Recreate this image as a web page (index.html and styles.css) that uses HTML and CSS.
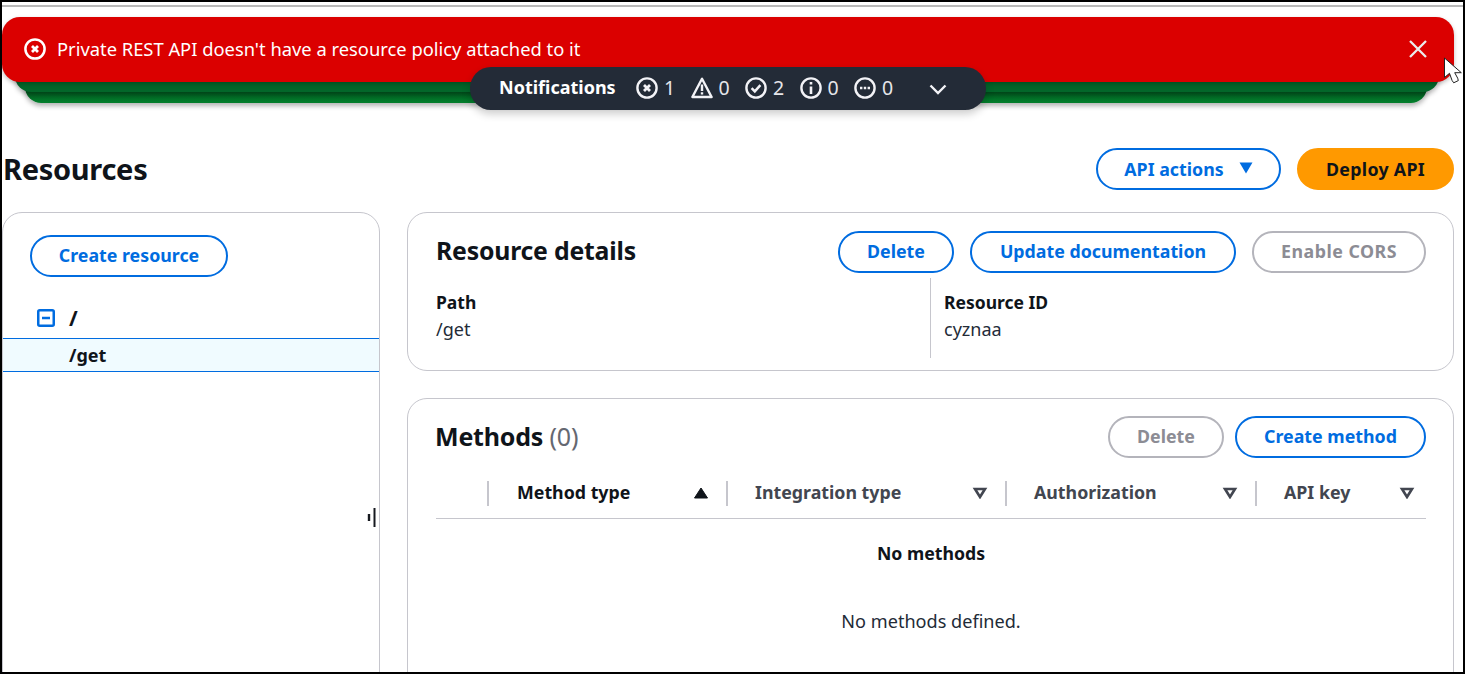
FILE: index.html
```html
<!DOCTYPE html>
<html lang="en">
<head>
<meta charset="utf-8">
<title>Resources</title>
<link rel="stylesheet" href="styles.css">
</head>
<body>
<div class="frame">
  <div class="topline"></div>

  <div class="flash-stack">
    <div class="flash-back flash-back-2"></div>
    <div class="flash-back flash-back-1"></div>
    <div class="flash-error">
      <svg class="flash-icon" viewBox="0 0 22 22"><circle cx="11" cy="11" r="9.6" fill="none" stroke="#fff" stroke-width="2.5"/><path d="M8 8l6 6M14 8l-6 6" stroke="#fff" stroke-width="2.8" fill="none"/></svg>
      <span class="flash-text">Private REST API doesn't have a resource policy attached to it</span>
      <svg class="flash-close" viewBox="0 0 18 18"><path d="M1 1l16 16M17 1L1 17" stroke="#eaeded" stroke-width="2.3" fill="none"/></svg>
    </div>
    <div class="notif-bar">
      <span class="notif-title">Notifications</span>
      <span class="notif-item notif-first"><svg class="ni" viewBox="0 0 22 22"><circle cx="11" cy="11" r="9.6" fill="none" stroke="#f3f3f7" stroke-width="2.4"/><path d="M8 8l6 6M14 8l-6 6" stroke="#f3f3f7" stroke-width="2.8" fill="none"/></svg>1</span>
      <span class="notif-item"><svg class="ni" viewBox="0 0 22 22"><path d="M11 1.8L1.4 20h19.2z" fill="none" stroke="#f3f3f7" stroke-width="2.4" stroke-linejoin="round"/><path d="M11 7.5v6.5M11 15.2v2.4" stroke="#f3f3f7" stroke-width="2.4" fill="none"/></svg>0</span>
      <span class="notif-item"><svg class="ni" viewBox="0 0 22 22"><circle cx="11" cy="11" r="9.6" fill="none" stroke="#f3f3f7" stroke-width="2.4"/><path d="M6.6 11.2l3.2 3.2 5.6-6.2" stroke="#f3f3f7" stroke-width="2.5" fill="none"/></svg>2</span>
      <span class="notif-item"><svg class="ni" viewBox="0 0 22 22"><circle cx="11" cy="11" r="9.6" fill="none" stroke="#f3f3f7" stroke-width="2.4"/><path d="M11 9.5v7.5M11 5v2.6" stroke="#f3f3f7" stroke-width="2.6" fill="none"/></svg>0</span>
      <span class="notif-item"><svg class="ni" viewBox="0 0 22 22"><circle cx="11" cy="11" r="9.6" fill="none" stroke="#f3f3f7" stroke-width="2.4"/><path d="M6 11h2.4M9.8 11h2.4M13.6 11h2.4" stroke="#f3f3f7" stroke-width="2.6" fill="none"/></svg>0</span>
      <svg class="notif-caret" viewBox="0 0 18 11"><path d="M1.5 1.5L9 9l7.5-7.5" stroke="#f3f3f7" stroke-width="2.4" fill="none"/></svg>
    </div>
  </div>

  <svg class="cursor" viewBox="0 0 19 27"><path d="M1.5 1v19.5l5-4.2 2.6 7.2 1.6 2.3 4.6-2.2-.6-2.4-3-5.5h6.6z" fill="#fff" stroke="#222" stroke-width="1"/></svg>

  <header class="page-head">
    <h1 class="page-title">Resources</h1>
    <div class="actions">
      <button class="btn btn-api">API actions<svg class="btn-caret" viewBox="0 0 14 12"><path d="M0.5 0.5h13L7 11.5z" fill="#006ce0"/></svg></button>
      <button class="btn btn-primary">Deploy API</button>
    </div>
  </header>

  <div class="columns">
    <aside class="tree-panel">
      <button class="btn btn-create-res">Create resource</button>
      <div class="tree-root">
        <svg class="tree-icon" viewBox="0 0 18 18"><rect x="1.25" y="1.25" width="15.5" height="15.5" rx="1.5" fill="none" stroke="#006ce0" stroke-width="2.5"/><path d="M5 9h8" stroke="#006ce0" stroke-width="2.5"/></svg>
        <span class="tree-slash">/</span>
      </div>
      <div class="tree-child">/get</div>
      <svg class="resize" viewBox="0 0 9 19"><path d="M2 6v7" stroke="#16191f" stroke-width="2.4"/><path d="M7.5 0v19" stroke="#16191f" stroke-width="2"/></svg>
    </aside>

    <main class="details">
      <section class="card card-res">
        <div class="card-head">
          <h2 class="card-title">Resource details</h2>
          <div class="card-btns">
            <button class="btn btn-del">Delete</button>
            <button class="btn btn-doc">Update documentation</button>
            <button class="btn btn-cors btn-off">Enable CORS</button>
          </div>
        </div>
        <div class="kv-row">
          <div class="kv kv-left"><div class="kv-label">Path</div><div class="kv-value">/get</div></div>
          <div class="kv kv-right"><div class="kv-label">Resource ID</div><div class="kv-value">cyznaa</div></div>
        </div>
      </section>

      <section class="card card-methods">
        <div class="card-head card-head-m">
          <h2 class="card-title">Methods <span class="count">(0)</span></h2>
          <div class="card-btns card-btns-m">
            <button class="btn btn-del btn-off">Delete</button>
            <button class="btn btn-method">Create method</button>
          </div>
        </div>
        <div class="thead">
          <div class="th th-blank"></div>
          <div class="th th-active">Method type<svg class="sort" viewBox="0 0 16 12"><path d="M8 1l6.5 10h-13z" fill="#0f141a" stroke="#0f141a" stroke-linejoin="round"/></svg></div>
          <div class="th">Integration type<svg class="sort" viewBox="0 0 14 12"><path d="M2 2h10L7 10z" fill="none" stroke="#424650" stroke-width="2.6"/></svg></div>
          <div class="th">Authorization<svg class="sort" viewBox="0 0 14 12"><path d="M2 2h10L7 10z" fill="none" stroke="#424650" stroke-width="2.6"/></svg></div>
          <div class="th">API key<svg class="sort" viewBox="0 0 14 12"><path d="M2 2h10L7 10z" fill="none" stroke="#424650" stroke-width="2.6"/></svg></div>
        </div>
        <div class="empty-title">No methods</div>
        <div class="empty-text">No methods defined.</div>
      </section>
    </main>
  </div>
</div>
</body>
</html>
```

FILE: styles.css
```css
* { box-sizing: border-box; }
html, body { margin: 0; padding: 0; background: #fff; }
body { font-family: "Noto Sans", "Open Sans", sans-serif; color: #0f141a; }

.frame {
  position: relative;
  width: 1465px;
  height: 674px;
  overflow: hidden;
  background: #fff;
  border-style: solid;
  border-color: #000;
  border-width: 2px 2px 2px 2px;
}
.topline { height: 2px; margin-top: 3px; background: #b9b9b9; }

/* flash notifications */
.flash-stack { position: absolute; left: 0; top: 15px; width: 1452px; height: 95px; }
.flash-back { position: absolute; border-radius: 0 0 16px 16px; background: linear-gradient(#025f22 calc(100% - 11px), #037f2c 100%); box-shadow: 0 3px 5px rgba(0,0,0,.3); }
.flash-back-1 { left: 13px; right: 15px; top: 50px; height: 25px; background: #03672a; }
.flash-back-2 { left: 23px; right: 27px; top: 60px; height: 26px; }
.flash-error {
  position: absolute; left: 0; right: 0; top: 0; height: 65px;
  display: flex; align-items: center;
  background: #db0000; border-radius: 18px;
  padding: 0 27px 2px 22px;
  box-shadow: 0 2px 4px rgba(0,0,0,.25);
}
.flash-icon { width: 22px; height: 22px; margin-right: 11px; flex: none; }
.flash-text { flex: 1; color: #fff; font-size: 18.35px; line-height: 26px; }
.flash-close { width: 18px; height: 18px; flex: none; }
.notif-bar {
  position: absolute; left: 468px; top: 50px; width: 516px; height: 43px;
  display: flex; align-items: center;
  background: #232b37; border-radius: 21px;
  padding: 0 0 3px 29px;
  color: #f3f3f7; font-size: 19.5px;
  box-shadow: 0 4px 8px rgba(0,0,0,.2);
}
.notif-title { font-weight: 700; color: #fff; width: 137px; font-size: 18px; }
.notif-item { display: flex; align-items: center; width: 54.5px; color: #e6e6ea; }
.ni { width: 22px; height: 22px; margin-right: 6px; margin-top: 2px; }
.notif-caret { width: 18px; height: 11px; margin-left: 20px; margin-top: 4px; }

.cursor { position: absolute; left: 1441px; top: 55px; width: 19px; height: 27px; }

/* header */
.page-head {
  display: flex; align-items: center; justify-content: space-between;
  padding: 0 9px 0 1px; margin-top: 141px; height: 42px;
}
.page-title { margin: 0 0 2px; font-size: 29px; font-weight: 700; letter-spacing: -.3px; }
.actions { display: flex; gap: 16px; }

.btn {
  height: 42px; border-radius: 21px; border: 2px solid #006ce0;
  background: #fff; color: #006ce0; font: 700 17.8px "Noto Sans", "Open Sans", sans-serif;
  padding: 0 0 2px; text-align: center; white-space: nowrap;
}
.btn-api { width: 185px; display: flex; align-items: center; justify-content: center; gap: 15px; padding: 0; }
.btn-caret { width: 14px; height: 12px; margin-top: -2px; }
.btn-primary { width: 157px; background: #ff9900; border-color: #ff9900; color: #0f141a; padding: 0; letter-spacing: .3px; }
.btn-off { border-color: #b4b4bb; color: #8c8c94; }
.btn-create-res { width: 198px; display: block; margin-left: 27px; }
.btn-del { width: 116px; }
.btn-doc { width: 266px; }
.btn-cors { width: 174px; letter-spacing: .5px; }
.btn-method { width: 191px; }

/* columns */
.columns { display: flex; margin-top: 22px; align-items: flex-start; }
.tree-panel {
  position: relative;
  width: 378px; height: 480px; flex: none;
  border: 1px solid #c6c6cd; border-radius: 20px 20px 0 0;
  padding-top: 22px;
}
.tree-root { display: flex; align-items: center; gap: 14px; height: 34px; margin-top: 24px; padding-left: 34px; font-weight: 700; font-size: 18px; }
.tree-slash { font-size: 21px; margin-top: -1px; }
.tree-icon { width: 18px; height: 18px; }
.tree-child {
  height: 34px; margin-top: 3px; padding-left: 66px; line-height: 33px;
  font-weight: 700; font-size: 18px;
  background: #f0fbff; border-top: 1px solid #006ce0; border-bottom: 1px solid #006ce0;
}
.resize { position: absolute; right: 3px; top: 295px; width: 9px; height: 19px; }

.details { margin-left: 27px; width: 1047px; flex: none; }
.card { border: 1px solid #c6c6cd; border-radius: 20px; padding: 0 27px 0 28px; }
.card-res { height: 159px; padding-top: 18px; }
.card-methods { height: 300px; margin-top: 27px; padding-top: 17px; }
.card-head { display: flex; justify-content: space-between; align-items: center; height: 42px; }
.card-title { margin: 0 0 4px; font-size: 24.8px; font-weight: 700; letter-spacing: -.2px; }
.card-head-m .card-title { margin: 0 0 3px -1px; font-size: 25px; }
.count { font-weight: 400; color: #656871; }
.card-btns { display: flex; gap: 16px; }
.card-btns-m { gap: 11px; }

.kv-row { display: flex; margin-top: 5px; }
.kv-left { width: 494px; }
.kv-right { border-left: 1px solid #c6c6cd; padding-left: 13px; flex: 1; height: 80px; }
.kv-label { font-weight: 700; font-size: 17.5px; line-height: 27px; margin-top: 11px; }
.kv-value { font-size: 18px; line-height: 27px; color: #232b37; }

.thead {
  display: grid; grid-template-columns: 51px 239px 279px 250px 171px;
  margin-top: 23px; height: 38px; padding-bottom: 12px;
  border-bottom: 1px solid #c6c6cd;
}
.th {
  display: flex; align-items: center; justify-content: space-between;
  border-left: 2px solid #c6c6cd;
  padding: 0 17px 0 27px;
  font-size: 17.8px; font-weight: 700; color: #424650; line-height: 22px;
}
.th > svg { margin-top: 2px; }
.th:not(.th-blank) { padding-bottom: 3px; }
.th-blank { border-left: 0; }
.th-active { color: #0f141a; padding-right: 17px; padding-left: 28px; }
.th:last-child { padding-right: 11px; }
.sort { width: 16px; height: 12px; }
.empty-title { text-align: center; font-size: 17.7px; font-weight: 700; margin-top: 21px; line-height: 26px; }
.empty-text { text-align: center; font-size: 18.1px; margin-top: 42px; line-height: 26px; color: #232b37; }
```
